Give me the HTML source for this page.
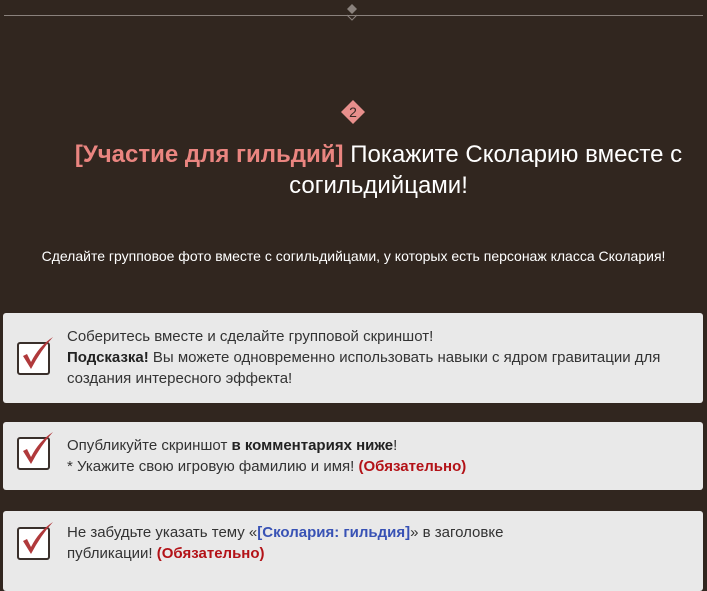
<!DOCTYPE html>
<html><head><meta charset="utf-8"><style>
body{margin:0;width:707px;height:577px;overflow:hidden;background:#31261f;font-family:"Liberation Sans",Arial,sans-serif;position:relative}
.line{position:absolute;left:4px;right:4px;top:15px;height:1px;background:#8a817c}
.box{position:absolute;left:3px;width:700px;background:#e9e9e9;border-radius:3px}
.cb{position:absolute;left:17px;width:29px;height:29px;border:2px solid #3a302b;border-radius:3px;background:#fff}
.txt{position:absolute;left:67px;right:30px;font-size:15px;line-height:21px;color:#333}
b{color:#222}
.req{color:#b31217;font-weight:bold}
.blue{color:#3852b5;font-weight:bold}
</style></head><body>
<div class="line"></div>
<svg style="position:absolute;left:342px;top:3px" width="22" height="22"><path d="M10 1 L15 6 L10 11 L5 6Z" fill="#8a817c"/><path d="M5 12 L10 17 L15 12" stroke="#8a817c" fill="none"/></svg>
<svg style="position:absolute;left:340px;top:99px" width="26" height="26"><path d="M13 1 L25 13 L13 25 L1 13Z" fill="#e88f8c"/><text x="13" y="18" text-anchor="middle" font-size="14" fill="#3a2a25" font-family="Liberation Sans">2</text></svg>
<div style="position:absolute;left:50px;right:0px;top:139px;text-align:center;font-size:24px;line-height:31px;color:#fff"><span style="color:#ea8580;font-weight:bold">[Участие для гильдий]</span> Покажите Сколарию вместе с согильдийцами!</div>
<div style="position:absolute;left:0;right:0;top:248px;text-align:center;font-size:14px;color:#fff">Сделайте групповое фото вместе с согильдийцами, у которых есть персонаж класса Сколария!</div>
<div class="box" style="top:313px;height:90px"></div>
<div class="box" style="top:422px;height:68px"></div>
<div class="box" style="top:511px;height:80px"></div>
<div class="cb" style="top:342px"><svg width="40" height="40" style="position:absolute;left:0;top:-6px;overflow:visible"><path d="M4 18 L8 16 L12 24 Q20 8 34 -1 Q22 12 12 31 Z" fill="#b0393b"/></svg></div>
<div class="cb" style="top:437px"><svg width="40" height="40" style="position:absolute;left:0;top:-6px;overflow:visible"><path d="M4 18 L8 16 L12 24 Q20 8 34 -1 Q22 12 12 31 Z" fill="#b0393b"/></svg></div>
<div class="cb" style="top:527px"><svg width="40" height="40" style="position:absolute;left:0;top:-6px;overflow:visible"><path d="M4 18 L8 16 L12 24 Q20 8 34 -1 Q22 12 12 31 Z" fill="#b0393b"/></svg></div>
<div class="txt" style="top:326px">Соберитесь вместе и сделайте групповой скриншот!<br><b>Подсказка!</b> Вы можете одновременно использовать навыки с ядром гравитации для создания интересного эффекта!</div>
<div class="txt" style="top:435px">Опубликуйте скриншот <b>в комментариях ниже</b>!<br>* Укажите свою игровую фамилию и имя! <span class="req">(Обязательно)</span></div>
<div class="txt" style="top:522px;right:auto;width:480px">Не забудьте указать тему «<span class="blue">[Сколария: гильдия]</span>» в заголовке публикации! <span class="req">(Обязательно)</span></div>
</body></html>
